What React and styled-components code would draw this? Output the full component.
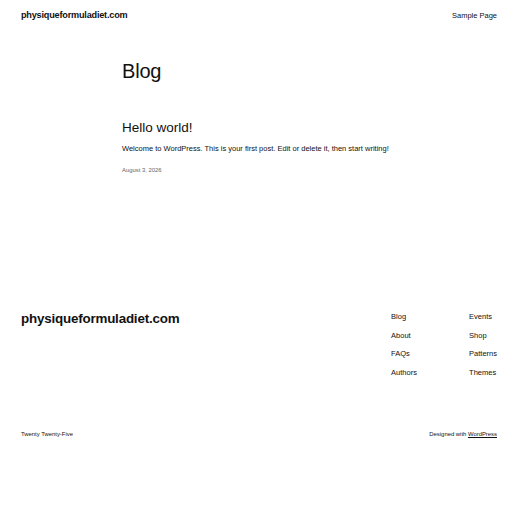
import React from 'react'
import styled, { createGlobalStyle } from 'styled-components'

const GlobalStyle = createGlobalStyle`
  html, body {
    margin: 0;
    padding: 0;
    background: #ffffff;
  }
  body {
    font-family: "Liberation Sans", Arial, sans-serif;
    color: #111111;
  }
`

const Page = styled.div`
  display: flex;
  flex-direction: column;
  min-height: 512px;
`

const Header = styled.header`
  display: flex;
  justify-content: space-between;
  align-items: center;
  padding: 9px 15px 0 21px;
  height: 12px;
`

const SiteTitle = styled.a`
  font-size: ${p => (p.$large ? '13.4px' : '9.15px')};
  font-weight: 700;
  letter-spacing: -0.2px;
  color: #111111;
  text-decoration: none;
`

const NavLink = styled.a`
  font-size: 7.5px;
  color: #111111;
  text-decoration: none;
`

const Main = styled.main`
  padding: 38px 0 0 122px;
  height: 240px;
`

const PageTitle = styled.h1`
  margin: 0;
  font-size: 20px;
  font-weight: 400;
  line-height: 24px;
  letter-spacing: -0.2px;
`

const Post = styled.article`
  margin-top: 36px;
`

const PostTitle = styled.h2`
  margin: 0;
  font-size: 13.5px;
  font-weight: 400;
  line-height: 17px;
`

const Excerpt = styled.p`
  margin: 8px 0 0;
  font-size: 7.5px;
  line-height: 10px;
`

const PostDate = styled.div`
  margin-top: 13px;
  font-size: 5.9px;
  color: #666666;
`

const Footer = styled.footer`
  display: flex;
  justify-content: space-between;
  align-items: flex-start;
  padding: 12px 15px 0 21px;
  height: 132px;
  box-sizing: border-box;
`

const FooterNav = styled.nav`
  display: grid;
  grid-template-columns: 78px auto;
  row-gap: 8.7px;
  padding-top: 1px;
`

const FooterLink = styled.a`
  font-size: 7.5px;
  line-height: 10px;
  color: #111111;
  text-decoration: none;
`

const Bottom = styled.div`
  display: flex;
  justify-content: space-between;
  padding: 0 15px 0 21px;
  font-size: 5.9px;
  color: #111111;
`

const Credit = styled.a`
  color: #111111;
  text-decoration: underline;
`

const links = ['Blog', 'Events', 'About', 'Shop', 'FAQs', 'Patterns', 'Authors', 'Themes']

export default function App() {
  return (
    <>
      <GlobalStyle />
      <Page>
        <Header>
          <SiteTitle href="#">physiqueformuladiet.com</SiteTitle>
          <NavLink href="#">Sample Page</NavLink>
        </Header>
        <Main>
          <PageTitle>Blog</PageTitle>
          <Post>
            <PostTitle>Hello world!</PostTitle>
            <Excerpt>Welcome to WordPress. This is your first post. Edit or delete it, then start writing!</Excerpt>
            <PostDate>August 3, 2026</PostDate>
          </Post>
        </Main>
        <Footer>
          <SiteTitle href="#" $large>physiqueformuladiet.com</SiteTitle>
          <FooterNav>
            {links.map(l => (
              <FooterLink key={l} href="#">{l}</FooterLink>
            ))}
          </FooterNav>
        </Footer>
        <Bottom>
          <span>Twenty Twenty-Five</span>
          <span>
            Designed with <Credit href="#">WordPress</Credit>
          </span>
        </Bottom>
      </Page>
    </>
  )
}
